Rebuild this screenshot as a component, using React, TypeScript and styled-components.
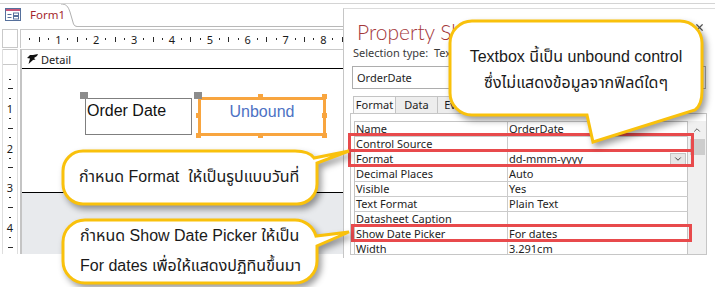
import React from "react";
import styled, { createGlobalStyle } from "styled-components";
import { ChevronDown, ChevronUp, X } from "lucide-react";

const GlobalStyle = createGlobalStyle`
  html, body { margin: 0; padding: 0; background: #ffffff; }
  body { font-family: "Noto Sans", "Liberation Sans", sans-serif; color: #1e1e1e; }
  * { box-sizing: border-box; }
`;

const Screen = styled.div`
  position: relative;
  width: 715px;
  height: 287px;
  padding-top: 3px;
  overflow: hidden;
  background: #fff;
`;

const Frame = styled.div`
  display: flex;
  border-top: 1px solid #d4d4d4;
`;

/* ---------- form designer ---------- */

const Designer = styled.div`
  width: 343px;
  flex: 0 0 343px;
  display: flex;
  flex-direction: column;
`;

const DocTabRow = styled.div`
  display: flex;
  height: 23px;
`;

const DocTab = styled.div`
  position: relative;
  width: 77px;
  display: flex;
  align-items: center;
  gap: 9px;
  padding: 0 0 2px 5px;
  font-size: 11.5px;
  color: #a4262c;
`;

const TabEdge = styled.svg`
  position: absolute;
  right: 0;
  top: 0;
`;

const TabFiller = styled.div`
  flex: 1;
  border-bottom: 1px solid #b8b8b8;
`;

const RulerRow = styled.div`
  display: flex;
  height: 19px;
  margin-top: 2px;
  padding-left: 2px;
`;

const RulerCorner = styled.div`
  width: 16px;
  border: 1px solid #c9c9c9;
`;

const HRuler = styled.div`
  flex: 1;
  margin-left: 2px;
  display: flex;
  align-items: center;
  padding-left: 4.2px;
  border-top: 1px solid #c9c9c9;
  border-left: 1px solid #c9c9c9;
  overflow: hidden;
`;

const HCell = styled.div`
  flex: 0 0 9.48px;
  height: 100%;
  display: flex;
  align-items: center;
  justify-content: center;
`;

const Tick = styled.span<{ $kind: "dot" | "half"; $axis: "h" | "v" }>`
  display: block;
  background: #2a2a2a;
  width: ${(p) => (p.$axis === "h" ? "1px" : p.$kind === "half" ? "5px" : "2px")};
  height: ${(p) => (p.$axis === "v" ? "1px" : p.$kind === "half" ? "5px" : "2px")};
`;

const RulerNum = styled.span`
  font-size: 11px;
  line-height: 1;
  color: #1a1a1a;
`;

const Section = styled.div`
  display: flex;
  height: 205px;
  margin-top: 1px;
  padding-left: 2px;
`;

const VRuler = styled.div`
  width: 16px;
  display: flex;
  flex-direction: column;
  border-left: 1px solid #dedede;
  border-right: 1px solid #dedede;
  overflow: hidden;
`;

const VRulerHead = styled.div`
  height: 16px;
  flex: 0 0 16px;
  border-top: 1px solid #c9c9c9;
  border-bottom: 1px solid #c9c9c9;
`;

const VTicks = styled.div`
  display: flex;
  flex-direction: column;
  padding-top: 9.3px;
`;

const VCell = styled.div`
  flex: 0 0 9.55px;
  display: flex;
  align-items: center;
  justify-content: center;
`;

const SplitBar = styled.div`
  width: 2px;
  margin-left: 2px;
  background: #c4c4c4;
`;

const Canvas = styled.div`
  flex: 1;
  display: flex;
  flex-direction: column;
`;

const SectionBar = styled.div`
  height: 20px;
  flex: 0 0 20px;
  display: flex;
  align-items: center;
  gap: 3px;
  padding-left: 5px;
  border-top: 1px solid #c9c9c9;
  border-bottom: 1px solid #000;
  font-size: 11px;
  color: #202020;
`;

const DetailArea = styled.div`
  position: relative;
  height: 124px;
  flex: 0 0 124px;
  background: #fff;
  border-bottom: 1px solid #000;
`;

const BackArea = styled.div`
  flex: 1;
  background: #e8eaed;
`;

const LabelBox = styled.div`
  position: absolute;
  left: 63px;
  top: 29px;
  width: 107px;
  height: 37px;
  border: 1px solid #7f7f7f;
  padding: 3px 1px;
  font-family: "Liberation Sans", Arial, sans-serif;
  font-size: 16px;
  line-height: 18px;
  color: #111;
`;

const TextBox = styled.div`
  position: absolute;
  left: 176px;
  top: 28px;
  width: 128px;
  height: 39px;
  border: 3px solid #f8a53f;
  padding-top: 3px;
  text-align: center;
  font-family: "Liberation Sans", Arial, sans-serif;
  font-size: 16px;
  line-height: 18px;
  color: #4e72c4;
`;

const MoveHandle = styled.span<{ $x: number; $y: number }>`
  position: absolute;
  left: ${(p) => p.$x}px;
  top: ${(p) => p.$y}px;
  width: 8px;
  height: 7px;
  background: #8c8c8c;
`;

const SizeHandle = styled.span<{ $x: number; $y: number }>`
  position: absolute;
  left: ${(p) => p.$x}px;
  top: ${(p) => p.$y}px;
  width: 5px;
  height: 5px;
  background: #f8a53f;
`;

/* ---------- property sheet ---------- */

const Sheet = styled.div`
  flex: 1;
  height: 250px;
  margin-top: 4px;
  display: flex;
  flex-direction: column;
  border-left: 1px solid #c6c6c6;
  border-top: 1px solid #dcdcdc;
  background: #fff;
`;

const SheetHead = styled.div`
  height: 38px;
  flex: 0 0 38px;
  display: flex;
  align-items: flex-start;
  padding: 8px 0 0 13px;
`;

const SheetTitle = styled.div`
  font-family: Lato, "Noto Sans", sans-serif;
  font-weight: 300;
  font-size: 21px;
  line-height: 30px;
  color: #a4373a;
  white-space: nowrap;
`;

const CloseBtn = styled.span`
  margin: 5px 10px 0 auto;
  display: flex;
  color: #555;
`;

const SelectionType = styled.div`
  height: 12px;
  margin-left: 9px;
  font-size: 11px;
  line-height: 12px;
  color: #3a3a3a;
  white-space: pre;
`;

const ObjectCombo = styled.div`
  height: 23px;
  margin: 7px 9px 0 8px;
  display: flex;
  align-items: center;
  padding-left: 4px;
  border: 1px solid #adadad;
  font-size: 11px;
`;

const TabStrip = styled.div`
  display: flex;
  height: 17px;
  margin-top: 7px;
  padding-left: 9px;
`;

const SheetTab = styled.div<{ $active?: boolean }>`
  width: 43px;
  margin-right: -1px;
  text-align: center;
  border: 1px solid #c3c3c3;
  border-bottom: none;
  background: ${(p) => (p.$active ? "#fafafa" : "#ededed")};
  font-size: 11px;
  line-height: 15px;
`;

const GridFrame = styled.div`
  width: 357px;
  height: 142px;
  margin-left: 6px;
  display: flex;
  align-items: flex-start;
  padding: 7px 0 0 3px;
  border: 1px solid #c6c6c6;
  overflow: hidden;
`;

const Grid = styled.div`
  width: 334px;
  display: flex;
  flex-direction: column;
  border-top: 1px solid #c4c4c4;
  border-left: 1px solid #c4c4c4;
`;

const Row = styled.div`
  display: grid;
  grid-template-columns: 153px 1fr;
  height: 15px;
  flex: 0 0 15px;
  border-bottom: 1px solid #cbcbcb;
  font-size: 11px;
  line-height: 14px;
`;

const NameCell = styled.div`
  padding-left: 1px;
  border-right: 1px solid #cbcbcb;
  white-space: nowrap;
`;

const ValueCell = styled.div`
  position: relative;
  padding-left: 1px;
  border-right: 1px solid #c4c4c4;
  white-space: nowrap;
`;

const DropButton = styled.span`
  position: absolute;
  right: 1px;
  top: 1px;
  width: 16px;
  height: 12px;
  display: flex;
  align-items: center;
  justify-content: center;
  background: #e6e6e6;
  border: 1px solid #c4c4c4;
  color: #444;
`;

const Scrollbar = styled.div`
  width: 18px;
  height: 140px;
  display: flex;
  flex-direction: column;
  align-items: center;
  background: #f0f0f0;
  color: #606060;
  padding-top: 4px;
`;

const ScrollThumb = styled.div`
  width: 15px;
  height: 16px;
  margin-top: 4px;
  background: #cdcdcd;
`;

/* ---------- annotations ---------- */

const Highlight = styled.div<{ $x: number; $y: number; $w: number; $h: number }>`
  position: absolute;
  left: ${(p) => p.$x}px;
  top: ${(p) => p.$y}px;
  width: ${(p) => p.$w}px;
  height: ${(p) => p.$h}px;
  border: 3px solid #e84a4c;
`;

const Callout = styled.div<{ $x: number; $y: number; $w: number; $h: number }>`
  position: absolute;
  left: ${(p) => p.$x}px;
  top: ${(p) => p.$y}px;
  width: ${(p) => p.$w}px;
  height: ${(p) => p.$h}px;
`;

const Bubble = styled.svg`
  position: absolute;
  left: 0;
  top: 0;
  overflow: visible;
  filter: drop-shadow(3px 4px 3px rgba(0, 0, 0, 0.38));
`;

const BubbleText = styled.div<{ $center?: boolean; $pad: string; $lh: number }>`
  position: relative;
  padding: ${(p) => p.$pad};
  text-align: ${(p) => (p.$center ? "center" : "left")};
  font-family: "Liberation Sans", Arial, "Noto Sans Thai", Tahoma, sans-serif;
  font-size: 16px;
  line-height: ${(p) => p.$lh}px;
  color: #1a1a1a;
  white-space: nowrap;
`;

const rows: [string, string][] = [
  ["Name", "OrderDate"],
  ["Control Source", ""],
  ["Format", "dd-mmm-yyyy"],
  ["Decimal Places", "Auto"],
  ["Visible", "Yes"],
  ["Text Format", "Plain Text"],
  ["Datasheet Caption", ""],
  ["Show Date Picker", "For dates"],
  ["Width", "3.291cm"],
];

const tabs = ["Format", "Data", "Event", "Other", "All"];

function Mark({ k, axis }: { k: number; axis: "h" | "v" }) {
  if (k % 4 === 0) return <RulerNum>{k / 4}</RulerNum>;
  return <Tick $axis={axis} $kind={k % 4 === 2 ? "half" : "dot"} />;
}

function FormIcon() {
  return (
    <svg width="16" height="13" viewBox="0 0 16 13">
      <rect x="0.5" y="0.5" width="15" height="12" fill="#fff" stroke="#56709c" />
      <rect x="1" y="1" width="14" height="2" fill="#c8557a" />
      <path d="M2.5 6.5h4M2.5 9.5h4" stroke="#56709c" />
      <rect x="8.5" y="5" width="5" height="2.5" fill="none" stroke="#56709c" />
      <rect x="8.5" y="8.5" width="5" height="2.5" fill="none" stroke="#56709c" />
    </svg>
  );
}

function SectionIcon() {
  return (
    <svg width="11" height="10" viewBox="0 0 11 10">
      <path d="M11 0 L6 1 L3 1 L0 4 L3 4.5 L1.5 10 L6 6 L8.5 5.5 L7 4 L10 2 Z" fill="#111" />
    </svg>
  );
}

export default function App() {
  const hMarks = Array.from({ length: 34 }, (_, i) => i + 1);
  const vMarks = Array.from({ length: 19 }, (_, i) => i + 1);

  return (
    <Screen>
      <GlobalStyle />
      <Frame>
        <Designer>
          <DocTabRow>
            <DocTab>
              <FormIcon />
              <span>Form1</span>
              <TabEdge width="16" height="23" viewBox="0 0 16 23">
                <path d="M0 0 C5 0 7 2 9 8 L12.5 20 Q13.5 22.5 16 22.5" fill="none" stroke="#b0b0b0" />
              </TabEdge>
            </DocTab>
            <TabFiller />
          </DocTabRow>
          <RulerRow>
            <RulerCorner />
            <HRuler>
              {hMarks.map((k) => (
                <HCell key={k}>
                  <Mark k={k} axis="h" />
                </HCell>
              ))}
            </HRuler>
          </RulerRow>
          <Section>
            <VRuler>
              <VRulerHead />
              <VTicks>
                {vMarks.map((k) => (
                  <VCell key={k}>
                    <Mark k={k} axis="v" />
                  </VCell>
                ))}
              </VTicks>
            </VRuler>
            <SplitBar />
            <Canvas>
              <SectionBar>
                <SectionIcon />
                <span>Detail</span>
              </SectionBar>
              <DetailArea>
                <LabelBox>Order Date</LabelBox>
                <MoveHandle $x={58} $y={23} />
                <TextBox>Unbound</TextBox>
                <MoveHandle $x={172} $y={23} />
                <SizeHandle $x={236} $y={25} />
                <SizeHandle $x={300} $y={25} />
                <SizeHandle $x={300} $y={44} />
                <SizeHandle $x={300} $y={64} />
                <SizeHandle $x={236} $y={64} />
                <SizeHandle $x={174} $y={64} />
                <SizeHandle $x={174} $y={44} />
              </DetailArea>
              <BackArea />
            </Canvas>
          </Section>
        </Designer>

        <Sheet>
          <SheetHead>
            <SheetTitle>Property Sheet</SheetTitle>
            <CloseBtn>
              <X size={11} strokeWidth={2.6} />
            </CloseBtn>
          </SheetHead>
          <SelectionType>Selection type:  Text Box</SelectionType>
          <ObjectCombo>OrderDate</ObjectCombo>
          <TabStrip>
            {tabs.map((t) => (
              <SheetTab key={t} $active={t === "Format"}>
                {t}
              </SheetTab>
            ))}
          </TabStrip>
          <GridFrame>
            <Grid>
              {rows.map(([name, value]) => (
                <Row key={name}>
                  <NameCell>{name}</NameCell>
                  <ValueCell>
                    {value}
                    {name === "Format" && (
                      <DropButton>
                        <ChevronDown size={10} strokeWidth={2.4} />
                      </DropButton>
                    )}
                  </ValueCell>
                </Row>
              ))}
            </Grid>
            <Scrollbar>
              <ChevronUp size={10} strokeWidth={2.4} />
              <ScrollThumb />
            </Scrollbar>
          </GridFrame>
        </Sheet>
      </Frame>

      <Highlight $x={348} $y={133} $w={346} $h={19} />
      <Highlight $x={348} $y={149} $w={346} $h={18} />
      <Highlight $x={351} $y={224} $w={341} $h={18} />

      <Callout $x={450} $y={21} $w={252} $h={94}>
        <Bubble width="252" height="94">
          <path
            d="M22 0 H230 A22 22 0 0 1 252 22 V70 Q252 84 245 89 L143 121 L137 94 H22 A22 22 0 0 1 0 72 V22 A22 22 0 0 1 22 0 Z"
            fill="#fff"
            stroke="#f9c10c"
            strokeWidth="3"
          />
        </Bubble>
        <BubbleText $center $pad="23px 0 0" $lh={26}>
          Textbox นี้เป็น unbound control
          <br />
          ซึ่งไม่แสดงข้อมูลจากฟิลด์ใดๆ
        </BubbleText>
      </Callout>

      <Callout $x={63} $y={151} $w={254} $h={53}>
        <Bubble width="254" height="53">
          <path
            d="M20 0 H232 Q246 0 251 7 L286 0 L254 12 V33 A20 20 0 0 1 234 53 H20 A20 20 0 0 1 0 33 V20 A20 20 0 0 1 20 0 Z"
            fill="#fff"
            stroke="#f9c10c"
            strokeWidth="3"
          />
        </Bubble>
        <BubbleText $pad="13px 0 0 16px" $lh={26}>
          กำหนด Format&nbsp; ให้เป็นรูปแบบวันที่
        </BubbleText>
      </Callout>

      <Callout $x={63} $y={220} $w={254} $h={63}>
        <Bubble width="254" height="63">
          <path
            d="M22 0 H232 A22 22 0 0 1 253 16 L286 12 L254 26 V41 A22 22 0 0 1 232 63 H22 A22 22 0 0 1 0 41 V22 A22 22 0 0 1 22 0 Z"
            fill="#fff"
            stroke="#f9c10c"
            strokeWidth="3"
          />
        </Bubble>
        <BubbleText $pad="1px 0 0 17px" $lh={30}>
          กำหนด Show Date Picker ให้เป็น
          <br />
          For dates เพื่อให้แสดงปฏิทินขึ้นมา
        </BubbleText>
      </Callout>
    </Screen>
  );
}
